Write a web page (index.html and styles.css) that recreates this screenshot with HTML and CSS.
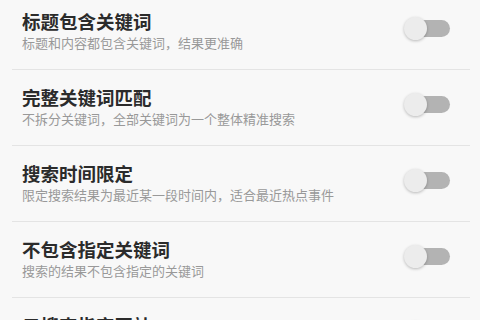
FILE: index.html
```html
<!DOCTYPE html>
<html lang="zh-CN">
<head>
  <meta charset="UTF-8">
  <meta name="viewport" content="width=device-width, initial-scale=1.0">
  <title>高级搜索设置</title>
  <link rel="stylesheet" href="styles.css">
</head>
<body>
  <div class="list">
    <div class="item">
      <div class="text">
        <div class="title">标题包含关键词</div>
        <div class="desc">标题和内容都包含关键词，结果更准确</div>
      </div>
      <span class="switch"><span class="thumb"></span></span>
    </div>

    <div class="item">
      <div class="text">
        <div class="title">完整关键词匹配</div>
        <div class="desc">不拆分关键词，全部关键词为一个整体精准搜索</div>
      </div>
      <span class="switch"><span class="thumb"></span></span>
    </div>

    <div class="item">
      <div class="text">
        <div class="title">搜索时间限定</div>
        <div class="desc">限定搜索结果为最近某一段时间内，适合最近热点事件</div>
      </div>
      <span class="switch"><span class="thumb"></span></span>
    </div>

    <div class="item">
      <div class="text">
        <div class="title">不包含指定关键词</div>
        <div class="desc">搜索的结果不包含指定的关键词</div>
      </div>
      <span class="switch"><span class="thumb"></span></span>
    </div>

    <div class="item">
      <div class="text">
        <div class="title">只搜索指定网站</div>
        <div class="desc">搜索结果只来自指定的网站</div>
      </div>
      <span class="switch"><span class="thumb"></span></span>
    </div>
  </div>
</body>
</html>
```

FILE: styles.css
```css
body { margin: 0; background: #f8f8f8; font-family: "Noto Sans CJK SC", "Noto Sans", sans-serif; overflow: hidden; }
.list { margin-top: -6px; }
.item { display: flex; align-items: center; margin: 0 10px 0 12px; padding: 14px 20px 17px 10px; border-bottom: 1px solid #e4e4e4; }
.text { flex: 1; }
.title { font-size: 18.5px; line-height: 26px; font-weight: bold; color: #2b2b2b; }
.desc { font-size: 13px; line-height: 18px; color: #999; }
.switch { position: relative; width: 36px; height: 17px; border-radius: 9px; background: #b3b3b3; margin-top: -4px; }
.thumb { position: absolute; left: -10px; top: -3px; width: 23px; height: 23px; border-radius: 50%; background: #ececec; box-shadow: 0 1px 3px rgba(0,0,0,0.25); }
```
